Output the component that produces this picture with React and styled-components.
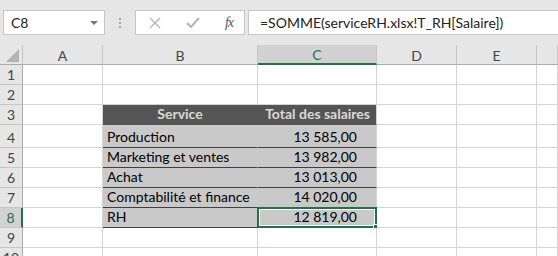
import React from "react";
import styled, { createGlobalStyle } from "styled-components";

const GlobalStyle = createGlobalStyle`
  html, body {
    margin: 0;
    padding: 0;
    background: #e6e6e6;
    overflow: hidden;
  }
  * {
    box-sizing: border-box;
  }
`;

const GREEN = "#217346";
const GRID = "#d4d4d4";
const CELL_FONT = `"Lato", "Liberation Sans", sans-serif`;

const Sheet = styled.div`
  width: 558px;
  height: 256px;
  background: #e6e6e6;
  font-family: ${CELL_FONT};
  overflow: hidden;
`;

const Toolbar = styled.div`
  display: flex;
  align-items: flex-start;
  height: 45px;
  padding: 10px 0 0 3px;
`;

const NameBox = styled.div`
  display: flex;
  align-items: center;
  justify-content: space-between;
  width: 102px;
  height: 25px;
  padding: 0 6px 0 7px;
  background: #fff;
  border: 1px solid #c6c6c6;
  font-size: 14px;
  color: #222;
`;

const DropArrow = styled.span`
  width: 0;
  height: 0;
  border-left: 4px solid transparent;
  border-right: 4px solid transparent;
  border-top: 4px solid #777;
`;

const Grip = styled.div`
  display: flex;
  flex-direction: column;
  justify-content: center;
  gap: 2px;
  width: 30px;
  height: 25px;
  align-items: center;

  span {
    width: 2px;
    height: 2px;
    background: #a8a8a8;
  }
`;

const FxBox = styled.div`
  display: flex;
  align-items: center;
  justify-content: space-between;
  width: 110px;
  height: 25px;
  padding: 0 11px 0 13px;
  background: #fff;
  border: 1px solid #c6c6c6;
`;

const FxLabel = styled.span`
  font-family: "Liberation Serif", "DejaVu Serif", serif;
  font-style: italic;
  font-size: 14px;
  color: #555;
  letter-spacing: -1px;
`;

const FormulaInput = styled.div`
  flex: 1;
  height: 25px;
  margin-left: 3px;
  margin-right: -2px;
  display: flex;
  align-items: center;
  padding-left: 11px;
  background: #fff;
  border: 1px solid #c6c6c6;
  font-size: 14px;
  color: #222;
  white-space: nowrap;
`;

const Grid = styled.div`
  display: grid;
  grid-template-columns: 23px 80px 155px 119px 80px 80px 1fr;
  grid-template-rows: 20px 20px 20px 20px 23px 20px 20px 20px 20px 20px 20px;
  background: #fff;
`;

const Corner = styled.div`
  background: #e6e6e6;
  border-right: 1px solid #c6c6c6;
  border-bottom: 1px solid #ababab;
  display: flex;
  align-items: flex-end;
  justify-content: flex-end;
  padding: 0 3px 2px 0;
`;

const ColHead = styled.div`
  display: flex;
  align-items: center;
  justify-content: center;
  padding-top: 1px;
  font-size: 14px;
  color: ${(p) => (p.$active ? GREEN : "#444")};
  background: ${(p) => (p.$active ? "#d2d2d2" : "#e6e6e6")};
  border-right: 1px solid #c6c6c6;
  border-bottom: ${(p) => (p.$active ? `2px solid ${GREEN}` : "1px solid #ababab")};
`;

const RowHead = styled.div`
  display: flex;
  align-items: flex-end;
  justify-content: center;
  padding-bottom: 1px;
  font-size: 14px;
  color: ${(p) => (p.$active ? GREEN : "#444")};
  background: ${(p) => (p.$active ? "#d2d2d2" : "#e6e6e6")};
  border-right: ${(p) => (p.$active ? `2px solid ${GREEN}` : "1px solid #ababab")};
  border-bottom: 1px solid #c6c6c6;
`;

const Cell = styled.div`
  position: relative;
  display: flex;
  align-items: flex-end;
  justify-content: ${(p) =>
    p.$align === "right" ? "flex-end" : p.$align === "center" ? "center" : "flex-start"};
  padding: 0 ${(p) => (p.$padRight ? p.$padRight : 4)}px 2px 4px;
  font-size: 14px;
  white-space: nowrap;
  color: #000;
  background: #fff;
  border-right: 1px solid ${GRID};
  border-bottom: 1px solid ${GRID};

  ${(p) =>
    p.$kind === "head" &&
    `
    background: #555555;
    color: #d9d9d9;
    font-weight: 700;
    border-bottom-color: #555555;
    border-right-color: ${p.$last ? GRID : "#555555"};
  `}

  ${(p) =>
    p.$kind === "data" &&
    `
    background: #c9c9c9;
    border-bottom-color: #3f3f3f;
    border-right-color: ${p.$last ? GRID : "#c9c9c9"};
  `}
`;

const Selection = styled.div`
  position: absolute;
  top: -1px;
  left: -1px;
  right: -1px;
  bottom: -1px;
  border: 2px solid ${GREEN};
  box-shadow: inset 0 0 0 1px #fff;
  pointer-events: none;
`;

const Handle = styled.div`
  position: absolute;
  right: -4px;
  bottom: -4px;
  width: 6px;
  height: 6px;
  background: ${GREEN};
  border: 1px solid #fff;
`;

const columns = ["A", "B", "C", "D", "E", ""];

const table = [
  ["Production", "13 585,00"],
  ["Marketing et ventes", "13 982,00"],
  ["Achat", "13 013,00"],
  ["Comptabilité et finance", "14 020,00"],
  ["RH", "12 819,00"],
];

function XIcon() {
  return (
    <svg width="12" height="12" viewBox="0 0 12 12">
      <path d="M1 1 L11 11 M11 1 L1 11" stroke="#b4b4b4" strokeWidth="1.4" fill="none" />
    </svg>
  );
}

function CheckIcon() {
  return (
    <svg width="14" height="11" viewBox="0 0 14 11">
      <path d="M1 6 L5 10 L13 1" stroke="#b4b4b4" strokeWidth="2" fill="none" />
    </svg>
  );
}

function CornerTriangle() {
  return (
    <svg width="13" height="13" viewBox="0 0 13 13">
      <path d="M13 0 L13 13 L0 13 Z" fill="#b4b4b4" />
    </svg>
  );
}

function renderRow(rowNum) {
  const active = rowNum === 8;
  const cells = [];
  const dataIndex = rowNum - 4;

  if (rowNum === 3) {
    cells.push(<Cell key="a" />);
    cells.push(
      <Cell key="b" $kind="head" $align="center">
        Service
      </Cell>
    );
    cells.push(
      <Cell key="c" $kind="head" $align="right" $padRight={6} $last>
        Total des salaires
      </Cell>
    );
  } else if (dataIndex >= 0 && dataIndex < table.length) {
    const [name, total] = table[dataIndex];
    cells.push(<Cell key="a" />);
    cells.push(
      <Cell key="b" $kind="data">
        {name}
      </Cell>
    );
    cells.push(
      <Cell key="c" $kind="data" $align="right" $padRight={19} $last>
        {total}
        {active && (
          <Selection>
            <Handle />
          </Selection>
        )}
      </Cell>
    );
  } else {
    cells.push(<Cell key="a" />, <Cell key="b" />, <Cell key="c" />);
  }

  cells.push(<Cell key="d" />, <Cell key="e" />, <Cell key="f" />);

  return (
    <React.Fragment key={rowNum}>
      <RowHead $active={active}>{rowNum}</RowHead>
      {cells}
    </React.Fragment>
  );
}

export default function App() {
  return (
    <Sheet>
      <GlobalStyle />
      <Toolbar>
        <NameBox>
          C8
          <DropArrow />
        </NameBox>
        <Grip>
          <span />
          <span />
          <span />
        </Grip>
        <FxBox>
          <XIcon />
          <CheckIcon />
          <FxLabel>fx</FxLabel>
        </FxBox>
        <FormulaInput>=SOMME(serviceRH.xlsx!T_RH[Salaire])</FormulaInput>
      </Toolbar>
      <Grid>
        <Corner>
          <CornerTriangle />
        </Corner>
        {columns.map((c) => (
          <ColHead key={c || "f"} $active={c === "C"}>
            {c}
          </ColHead>
        ))}
        {Array.from({ length: 10 }, (_, i) => renderRow(i + 1))}
      </Grid>
    </Sheet>
  );
}
